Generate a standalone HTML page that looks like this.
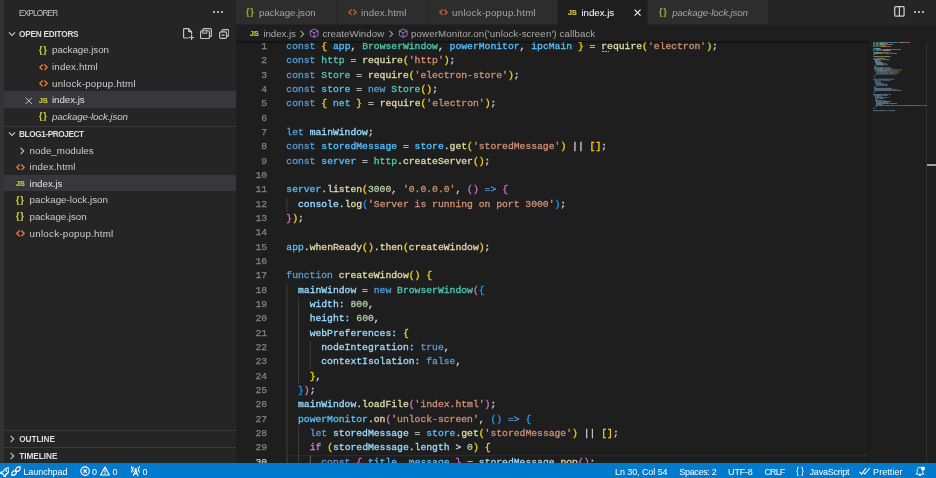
<!DOCTYPE html>
<html lang="en"><head><meta charset="utf-8"><title>index.js - blog1-project - Visual Studio Code</title>
<style>
html,body{margin:0;padding:0}
body{width:936px;height:478px;overflow:hidden;background:#1e1e1e;position:relative;font-family:"Liberation Sans", sans-serif;-webkit-font-smoothing:antialiased;will-change:transform}
.t{position:absolute;white-space:pre;line-height:14px;height:14px}
.ic{-webkit-text-stroke:0.2px}
.ln{position:absolute;left:0;width:31.2px;text-align:right;font-family:"Liberation Mono", monospace;font-size:9.72px;letter-spacing:-0.003px;line-height:14px;height:14px;white-space:pre;-webkit-text-stroke:0.25px}
.cl{position:absolute;left:50.30px;font-family:"Liberation Mono", monospace;font-size:9.72px;letter-spacing:-0.003px;line-height:14px;height:14px;white-space:pre;color:#d4d4d4;-webkit-text-stroke:0.3px}
</style></head><body>
<div style="position:absolute;left:0px;top:0px;width:4px;height:463px;background:#333333;"></div>
<div style="position:absolute;left:4px;top:0px;width:231.5px;height:463px;background:#252526;"></div>
<div style="position:absolute;left:235.5px;top:0px;width:0.5px;height:463px;background:#222222;"></div>
<div style="position:absolute;left:212.8px;top:11.1px;width:2.0px;height:2.0px;background:#c8c8c8;border-radius:35%"></div>
<div style="position:absolute;left:216.65px;top:11.1px;width:2.0px;height:2.0px;background:#c8c8c8;border-radius:35%"></div>
<div style="position:absolute;left:220.5px;top:11.1px;width:2.0px;height:2.0px;background:#c8c8c8;border-radius:35%"></div>
<svg style="position:absolute;left:7.699999999999999px;top:30.299999999999997px;" width="8" height="8" viewBox="0 0 8 8"><path d="M0.9 2.4 L4 5.5 L7.1 2.4" fill="none" stroke="#c5c5c5" stroke-width="1.1"/></svg>
<svg style="position:absolute;left:183px;top:28px;" width="11.5" height="12" viewBox="0 0 11.5 12"><path d="M5.6 10H1.4a0.8 0.8 0 0 1-0.8-0.8V1.4a0.8 0.8 0 0 1 0.8-0.8H5.6L8.6 3.6V6.4M5.6 0.6V3.6H8.6" fill="none" stroke="#c8c8c8" stroke-width="1.15" stroke-linejoin="round"/><path d="M8.6 7V12M6.1 9.5H11.1" fill="none" stroke="#c8c8c8" stroke-width="1.1"/></svg>
<svg style="position:absolute;left:200px;top:28.3px;" width="12" height="11.2" viewBox="0 0 12 11.2"><rect x="0.6" y="2.8" width="8.8" height="7.8" rx="1" fill="none" stroke="#c8c8c8" stroke-width="1.15"/><path d="M2.6 2.8V5.2H6.8V2.8" fill="none" stroke="#c8c8c8" stroke-width="1"/><path d="M3 2.8V1.6A1 1 0 0 1 4 0.6H10.4A1 1 0 0 1 11.4 1.6V7.4A1 1 0 0 1 10.4 8.4H9.4" fill="none" stroke="#c8c8c8" stroke-width="1.15"/></svg>
<svg style="position:absolute;left:219px;top:29px;" width="10.4" height="10" viewBox="0 0 10.4 10"><rect x="0.6" y="2.8" width="7" height="6.6" rx="1.5" fill="none" stroke="#c8c8c8" stroke-width="1.15"/><path d="M3 2.8V1.9A1.3 1.3 0 0 1 4.3 0.6H8.5A1.3 1.3 0 0 1 9.8 1.9V5.9A1.3 1.3 0 0 1 8.5 7.2H7.6M2.6 6.1H5.6" fill="none" stroke="#c8c8c8" stroke-width="1.15"/></svg>
<div style="position:absolute;left:4px;top:91.3px;width:231.5px;height:16.6px;background:#37373d;"></div>
<svg style="position:absolute;left:39.199999999999996px;top:63.6px;" width="9" height="6.8" viewBox="0 0 9 6.8"><path d="M3.7 0.6L0.9 3.4L3.7 6.2M5.3 0.6L8.1 3.4L5.3 6.2" fill="none" stroke="#e37933" stroke-width="1.35"/></svg>
<svg style="position:absolute;left:39.199999999999996px;top:80.19999999999999px;" width="9" height="6.8" viewBox="0 0 9 6.8"><path d="M3.7 0.6L0.9 3.4L3.7 6.2M5.3 0.6L8.1 3.4L5.3 6.2" fill="none" stroke="#e37933" stroke-width="1.35"/></svg>
<svg style="position:absolute;left:24.7px;top:96.7px;" width="7.6" height="7.6" viewBox="0 0 8 8"><path d="M0.7 0.7L7.3 7.3M7.3 0.7L0.7 7.3" stroke="#cccccc" stroke-width="1.0" fill="none"/></svg>
<div style="position:absolute;left:4px;top:125.5px;width:231.5px;height:0.7px;background:#3a3a3b;"></div>
<svg style="position:absolute;left:7.699999999999999px;top:130.2px;" width="8" height="8" viewBox="0 0 8 8"><path d="M0.9 2.4 L4 5.5 L7.1 2.4" fill="none" stroke="#c5c5c5" stroke-width="1.1"/></svg>
<div style="position:absolute;left:4px;top:175.2px;width:231.5px;height:15.9px;background:#37373d;"></div>
<svg style="position:absolute;left:18px;top:146.6px;" width="8" height="8" viewBox="0 0 8 8"><path d="M2.6 0.9 L5.7 4 L2.6 7.1" fill="none" stroke="#c5c5c5" stroke-width="1.1"/></svg>
<svg style="position:absolute;left:16.2px;top:163.6px;" width="9" height="6.8" viewBox="0 0 9 6.8"><path d="M3.7 0.6L0.9 3.4L3.7 6.2M5.3 0.6L8.1 3.4L5.3 6.2" fill="none" stroke="#e37933" stroke-width="1.35"/></svg>
<svg style="position:absolute;left:16.2px;top:230.2px;" width="9" height="6.8" viewBox="0 0 9 6.8"><path d="M3.7 0.6L0.9 3.4L3.7 6.2M5.3 0.6L8.1 3.4L5.3 6.2" fill="none" stroke="#e37933" stroke-width="1.35"/></svg>
<div style="position:absolute;left:4px;top:429.8px;width:231.5px;height:0.7px;background:#3a3a3b;"></div>
<svg style="position:absolute;left:7.5px;top:435.2px;" width="8" height="8" viewBox="0 0 8 8"><path d="M2.6 0.9 L5.7 4 L2.6 7.1" fill="none" stroke="#c5c5c5" stroke-width="1.1"/></svg>
<div style="position:absolute;left:4px;top:447.3px;width:231.5px;height:0.7px;background:#3a3a3b;"></div>
<svg style="position:absolute;left:7.5px;top:452px;" width="8" height="8" viewBox="0 0 8 8"><path d="M2.6 0.9 L5.7 4 L2.6 7.1" fill="none" stroke="#c5c5c5" stroke-width="1.1"/></svg>
<div style="position:absolute;left:236px;top:0px;width:700px;height:25px;background:#252526;"></div>
<div style="position:absolute;left:236px;top:0px;width:101.3px;height:24.4px;background:#2d2d2d;"></div>
<div style="position:absolute;left:338px;top:0px;width:90.3px;height:24.4px;background:#2d2d2d;"></div>
<svg style="position:absolute;left:348.09999999999997px;top:8.6px;" width="9" height="6.8" viewBox="0 0 9 6.8"><path d="M3.7 0.6L0.9 3.4L3.7 6.2M5.3 0.6L8.1 3.4L5.3 6.2" fill="none" stroke="#b06430" stroke-width="1.35"/></svg>
<div style="position:absolute;left:429px;top:0px;width:127.8px;height:24.4px;background:#2d2d2d;"></div>
<svg style="position:absolute;left:439.09999999999997px;top:8.6px;" width="9" height="6.8" viewBox="0 0 9 6.8"><path d="M3.7 0.6L0.9 3.4L3.7 6.2M5.3 0.6L8.1 3.4L5.3 6.2" fill="none" stroke="#b06430" stroke-width="1.35"/></svg>
<div style="position:absolute;left:557.5px;top:0px;width:89.8px;height:25px;background:#1e1e1e;"></div>
<div style="position:absolute;left:648px;top:0px;width:120.00000000000004px;height:24.4px;background:#2d2d2d;"></div>
<svg style="position:absolute;left:633.8px;top:9.2px;" width="7.2" height="7.2" viewBox="0 0 8 8"><path d="M0.7 0.7L7.3 7.3M7.3 0.7L0.7 7.3" stroke="#f0f0f0" stroke-width="1.25" fill="none"/></svg>
<svg style="position:absolute;left:894.3px;top:6.2px;" width="10.8" height="10.8" viewBox="0 0 10.8 10.8"><rect x="0.7" y="0.7" width="9.4" height="9.4" rx="1" fill="none" stroke="#cfcfcf" stroke-width="1.25"/><path d="M5.4 0.7V10.1" stroke="#cfcfcf" stroke-width="1.2"/></svg>
<div style="position:absolute;left:914.4px;top:11.3px;width:2.0px;height:2.0px;background:#c8c8c8;border-radius:35%"></div>
<div style="position:absolute;left:918.3px;top:11.3px;width:2.0px;height:2.0px;background:#c8c8c8;border-radius:35%"></div>
<div style="position:absolute;left:922.1999999999999px;top:11.3px;width:2.0px;height:2.0px;background:#c8c8c8;border-radius:35%"></div>
<svg style="position:absolute;left:298px;top:29.799999999999997px;" width="8" height="8" viewBox="0 0 8 8"><path d="M2.6 0.9 L5.7 4 L2.6 7.1" fill="none" stroke="#a0a0a0" stroke-width="1.1"/></svg>
<svg style="position:absolute;left:309px;top:28.2px;" width="10.4" height="10.4" viewBox="0 0 16 16"><path d="M8 1.5L14 4.5V11.5L8 14.5L2 11.5V4.5ZM2 4.5L8 7.5L14 4.5M8 7.5V14.5" fill="none" stroke="#b180d7" stroke-width="1.3" stroke-linejoin="round"/></svg>
<svg style="position:absolute;left:387.3px;top:29.799999999999997px;" width="8" height="8" viewBox="0 0 8 8"><path d="M2.6 0.9 L5.7 4 L2.6 7.1" fill="none" stroke="#a0a0a0" stroke-width="1.1"/></svg>
<svg style="position:absolute;left:397.8px;top:28.2px;" width="10.4" height="10.4" viewBox="0 0 16 16"><path d="M8 1.5L14 4.5V11.5L8 14.5L2 11.5V4.5ZM2 4.5L8 7.5L14 4.5M8 7.5V14.5" fill="none" stroke="#b180d7" stroke-width="1.3" stroke-linejoin="round"/></svg>
<div id="code" style="position:absolute;left:236px;top:0;width:633px;height:463px;overflow:hidden;clip-path:inset(41.5px 0 0 0)">
<svg style="position:absolute;left:0;top:0" width="633" height="463" viewBox="0 0 633 463"><rect x="51.6" y="455.60" width="581" height="14.3" fill="none" stroke="#2a2a2a" stroke-width="1.2"/><rect x="50.40" y="197.70" width="1" height="14.00" fill="#3e3e3e"/><rect x="50.40" y="283.70" width="1" height="186.00" fill="#3e3e3e"/><rect x="62.06" y="297.70" width="1" height="86.00" fill="#3e3e3e"/><rect x="73.72" y="340.70" width="1" height="29.00" fill="#3e3e3e"/><rect x="62.06" y="426.70" width="1" height="43.00" fill="#3e3e3e"/><rect x="73.72" y="455.70" width="1" height="14.00" fill="#6a6a6a"/></svg>
<div class="ln" style="top:40px;color:#858585">1</div>
<div class="cl" style="top:40px"><span style="color:#569cd6">const</span><span style="color:#d4d4d4"> </span><span style="color:#ffd700">{</span><span style="color:#d4d4d4"> </span><span style="color:#4fc1ff">app</span><span style="color:#d4d4d4">, </span><span style="color:#4ec9b0">BrowserWindow</span><span style="color:#d4d4d4">, </span><span style="color:#4fc1ff">powerMonitor</span><span style="color:#d4d4d4">, </span><span style="color:#4fc1ff">ipcMain</span><span style="color:#d4d4d4"> </span><span style="color:#ffd700">}</span><span style="color:#d4d4d4"> = </span><span style="color:#dcdcaa">require</span><span style="color:#ffd700">(</span><span style="color:#ce9178">&#x27;electron&#x27;</span><span style="color:#ffd700">)</span><span style="color:#d4d4d4">;</span></div>
<div class="ln" style="top:54px;color:#858585">2</div>
<div class="cl" style="top:54px"><span style="color:#569cd6">const</span><span style="color:#d4d4d4"> </span><span style="color:#4ec9b0">http</span><span style="color:#d4d4d4"> = </span><span style="color:#dcdcaa">require</span><span style="color:#ffd700">(</span><span style="color:#ce9178">&#x27;http&#x27;</span><span style="color:#ffd700">)</span><span style="color:#d4d4d4">;</span></div>
<div class="ln" style="top:69px;color:#858585">3</div>
<div class="cl" style="top:69px"><span style="color:#569cd6">const</span><span style="color:#d4d4d4"> </span><span style="color:#4ec9b0">Store</span><span style="color:#d4d4d4"> = </span><span style="color:#dcdcaa">require</span><span style="color:#ffd700">(</span><span style="color:#ce9178">&#x27;electron-store&#x27;</span><span style="color:#ffd700">)</span><span style="color:#d4d4d4">;</span></div>
<div class="ln" style="top:83px;color:#858585">4</div>
<div class="cl" style="top:83px"><span style="color:#569cd6">const</span><span style="color:#d4d4d4"> </span><span style="color:#4fc1ff">store</span><span style="color:#d4d4d4"> = </span><span style="color:#569cd6">new</span><span style="color:#d4d4d4"> </span><span style="color:#4ec9b0">Store</span><span style="color:#ffd700">()</span><span style="color:#d4d4d4">;</span></div>
<div class="ln" style="top:97px;color:#858585">5</div>
<div class="cl" style="top:97px"><span style="color:#569cd6">const</span><span style="color:#d4d4d4"> </span><span style="color:#ffd700">{</span><span style="color:#d4d4d4"> </span><span style="color:#4fc1ff">net</span><span style="color:#d4d4d4"> </span><span style="color:#ffd700">}</span><span style="color:#d4d4d4"> = </span><span style="color:#dcdcaa">require</span><span style="color:#ffd700">(</span><span style="color:#ce9178">&#x27;electron&#x27;</span><span style="color:#ffd700">)</span><span style="color:#d4d4d4">;</span></div>
<div class="ln" style="top:112px;color:#858585">6</div>
<div class="ln" style="top:126px;color:#858585">7</div>
<div class="cl" style="top:126px"><span style="color:#569cd6">let</span><span style="color:#d4d4d4"> </span><span style="color:#9cdcfe">mainWindow</span><span style="color:#d4d4d4">;</span></div>
<div class="ln" style="top:140px;color:#858585">8</div>
<div class="cl" style="top:140px"><span style="color:#569cd6">const</span><span style="color:#d4d4d4"> </span><span style="color:#4fc1ff">storedMessage</span><span style="color:#d4d4d4"> = </span><span style="color:#4fc1ff">store</span><span style="color:#d4d4d4">.</span><span style="color:#dcdcaa">get</span><span style="color:#ffd700">(</span><span style="color:#ce9178">&#x27;storedMessage&#x27;</span><span style="color:#ffd700">)</span><span style="color:#d4d4d4"> || </span><span style="color:#ffd700">[]</span><span style="color:#d4d4d4">;</span></div>
<div class="ln" style="top:155px;color:#858585">9</div>
<div class="cl" style="top:155px"><span style="color:#569cd6">const</span><span style="color:#d4d4d4"> </span><span style="color:#4fc1ff">server</span><span style="color:#d4d4d4"> = </span><span style="color:#4ec9b0">http</span><span style="color:#d4d4d4">.</span><span style="color:#dcdcaa">createServer</span><span style="color:#ffd700">()</span><span style="color:#d4d4d4">;</span></div>
<div class="ln" style="top:169px;color:#858585">10</div>
<div class="ln" style="top:183px;color:#858585">11</div>
<div class="cl" style="top:183px"><span style="color:#4fc1ff">server</span><span style="color:#d4d4d4">.</span><span style="color:#dcdcaa">listen</span><span style="color:#ffd700">(</span><span style="color:#b5cea8">3000</span><span style="color:#d4d4d4">, </span><span style="color:#ce9178">&#x27;0.0.0.0&#x27;</span><span style="color:#d4d4d4">, </span><span style="color:#da70d6">()</span><span style="color:#d4d4d4"> </span><span style="color:#569cd6">=&gt;</span><span style="color:#d4d4d4"> </span><span style="color:#da70d6">{</span></div>
<div class="ln" style="top:198px;color:#858585">12</div>
<div class="cl" style="top:198px"><span style="color:#d4d4d4">  </span><span style="color:#9cdcfe">console</span><span style="color:#d4d4d4">.</span><span style="color:#dcdcaa">log</span><span style="color:#179fff">(</span><span style="color:#ce9178">&#x27;Server is running on port 3000&#x27;</span><span style="color:#179fff">)</span><span style="color:#d4d4d4">;</span></div>
<div class="ln" style="top:212px;color:#858585">13</div>
<div class="cl" style="top:212px"><span style="color:#da70d6">}</span><span style="color:#ffd700">)</span><span style="color:#d4d4d4">;</span></div>
<div class="ln" style="top:226px;color:#858585">14</div>
<div class="ln" style="top:241px;color:#858585">15</div>
<div class="cl" style="top:241px"><span style="color:#4fc1ff">app</span><span style="color:#d4d4d4">.</span><span style="color:#dcdcaa">whenReady</span><span style="color:#ffd700">()</span><span style="color:#d4d4d4">.</span><span style="color:#dcdcaa">then</span><span style="color:#ffd700">(</span><span style="color:#dcdcaa">createWindow</span><span style="color:#ffd700">)</span><span style="color:#d4d4d4">;</span></div>
<div class="ln" style="top:255px;color:#858585">16</div>
<div class="ln" style="top:269px;color:#858585">17</div>
<div class="cl" style="top:269px"><span style="color:#569cd6">function</span><span style="color:#d4d4d4"> </span><span style="color:#dcdcaa">createWindow</span><span style="color:#ffd700">()</span><span style="color:#d4d4d4"> </span><span style="color:#ffd700">{</span></div>
<div class="ln" style="top:284px;color:#858585">18</div>
<div class="cl" style="top:284px"><span style="color:#d4d4d4">  </span><span style="color:#9cdcfe">mainWindow</span><span style="color:#d4d4d4"> = </span><span style="color:#569cd6">new</span><span style="color:#d4d4d4"> </span><span style="color:#4ec9b0">BrowserWindow</span><span style="color:#da70d6">(</span><span style="color:#179fff">{</span></div>
<div class="ln" style="top:298px;color:#858585">19</div>
<div class="cl" style="top:298px"><span style="color:#d4d4d4">    </span><span style="color:#9cdcfe">width</span><span style="color:#9cdcfe">:</span><span style="color:#d4d4d4"> </span><span style="color:#b5cea8">800</span><span style="color:#d4d4d4">,</span></div>
<div class="ln" style="top:312px;color:#858585">20</div>
<div class="cl" style="top:312px"><span style="color:#d4d4d4">    </span><span style="color:#9cdcfe">height</span><span style="color:#9cdcfe">:</span><span style="color:#d4d4d4"> </span><span style="color:#b5cea8">600</span><span style="color:#d4d4d4">,</span></div>
<div class="ln" style="top:327px;color:#858585">21</div>
<div class="cl" style="top:327px"><span style="color:#d4d4d4">    </span><span style="color:#9cdcfe">webPreferences</span><span style="color:#9cdcfe">:</span><span style="color:#d4d4d4"> </span><span style="color:#ffd700">{</span></div>
<div class="ln" style="top:341px;color:#858585">22</div>
<div class="cl" style="top:341px"><span style="color:#d4d4d4">      </span><span style="color:#9cdcfe">nodeIntegration</span><span style="color:#9cdcfe">:</span><span style="color:#d4d4d4"> </span><span style="color:#569cd6">true</span><span style="color:#d4d4d4">,</span></div>
<div class="ln" style="top:355px;color:#858585">23</div>
<div class="cl" style="top:355px"><span style="color:#d4d4d4">      </span><span style="color:#9cdcfe">contextIsolation</span><span style="color:#9cdcfe">:</span><span style="color:#d4d4d4"> </span><span style="color:#569cd6">false</span><span style="color:#d4d4d4">,</span></div>
<div class="ln" style="top:370px;color:#858585">24</div>
<div class="cl" style="top:370px"><span style="color:#d4d4d4">    </span><span style="color:#ffd700">}</span><span style="color:#d4d4d4">,</span></div>
<div class="ln" style="top:384px;color:#858585">25</div>
<div class="cl" style="top:384px"><span style="color:#d4d4d4">  </span><span style="color:#179fff">}</span><span style="color:#da70d6">)</span><span style="color:#d4d4d4">;</span></div>
<div class="ln" style="top:398px;color:#858585">26</div>
<div class="cl" style="top:398px"><span style="color:#d4d4d4">  </span><span style="color:#9cdcfe">mainWindow</span><span style="color:#d4d4d4">.</span><span style="color:#dcdcaa">loadFile</span><span style="color:#da70d6">(</span><span style="color:#ce9178">&#x27;index.html&#x27;</span><span style="color:#da70d6">)</span><span style="color:#d4d4d4">;</span></div>
<div class="ln" style="top:413px;color:#858585">27</div>
<div class="cl" style="top:413px"><span style="color:#d4d4d4">  </span><span style="color:#4fc1ff">powerMonitor</span><span style="color:#d4d4d4">.</span><span style="color:#dcdcaa">on</span><span style="color:#da70d6">(</span><span style="color:#ce9178">&#x27;unlock-screen&#x27;</span><span style="color:#d4d4d4">, </span><span style="color:#179fff">()</span><span style="color:#d4d4d4"> </span><span style="color:#569cd6">=&gt;</span><span style="color:#d4d4d4"> </span><span style="color:#179fff">{</span></div>
<div class="ln" style="top:427px;color:#858585">28</div>
<div class="cl" style="top:427px"><span style="color:#d4d4d4">    </span><span style="color:#569cd6">let</span><span style="color:#d4d4d4"> </span><span style="color:#9cdcfe">storedMessage</span><span style="color:#d4d4d4"> = </span><span style="color:#4fc1ff">store</span><span style="color:#d4d4d4">.</span><span style="color:#dcdcaa">get</span><span style="color:#ffd700">(</span><span style="color:#ce9178">&#x27;storedMessage&#x27;</span><span style="color:#ffd700">)</span><span style="color:#d4d4d4"> || </span><span style="color:#ffd700">[]</span><span style="color:#d4d4d4">;</span></div>
<div class="ln" style="top:441px;color:#858585">29</div>
<div class="cl" style="top:441px"><span style="color:#d4d4d4">    </span><span style="color:#c586c0">if</span><span style="color:#d4d4d4"> </span><span style="color:#ffd700">(</span><span style="color:#9cdcfe">storedMessage</span><span style="color:#d4d4d4">.</span><span style="color:#9cdcfe">length</span><span style="color:#d4d4d4"> &gt; </span><span style="color:#b5cea8">0</span><span style="color:#ffd700">)</span><span style="color:#d4d4d4"> </span><span style="color:#ffd700">{</span></div>
<div class="ln" style="top:456px;color:#c6c6c6">30</div>
<div class="cl" style="top:456px"><span style="color:#d4d4d4">      </span><span style="color:#569cd6">const</span><span style="color:#d4d4d4"> </span><span style="color:#da70d6">{</span><span style="color:#d4d4d4"> </span><span style="color:#4fc1ff">title</span><span style="color:#d4d4d4">, </span><span style="color:#4fc1ff">message</span><span style="color:#d4d4d4"> </span><span style="color:#da70d6">}</span><span style="color:#d4d4d4"> = </span><span style="color:#9cdcfe">storedMessage</span><span style="color:#d4d4d4">.</span><span style="color:#dcdcaa">pop</span><span style="color:#da70d6">()</span><span style="color:#d4d4d4">;</span></div>
<div style="position:absolute;left:366.4px;top:51.2px;width:1.5px;height:1.3px;background:#b4b4b4"></div>
<div style="position:absolute;left:369.0px;top:51.2px;width:1.5px;height:1.3px;background:#b4b4b4"></div>
<div style="position:absolute;left:371.6px;top:51.2px;width:1.5px;height:1.3px;background:#b4b4b4"></div>
</div>
<div style="position:absolute;left:236px;top:41.3px;width:633px;height:2.6px;background:transparent;background:linear-gradient(rgba(0,0,0,.45),rgba(0,0,0,0))"></div>
<div style="position:absolute;left:868.4px;top:42.5px;width:1px;height:420.5px;background:#191919;"></div>
<div style="position:absolute;left:926px;top:42.5px;width:0.8px;height:420.5px;background:#303030;"></div>
<div style="position:absolute;left:927px;top:164.3px;width:9px;height:1.3px;background:#a0a0a0;"></div>
<svg style="position:absolute;left:873.3px;top:41.7px;" width="54" height="72" viewBox="0 0 54 72"><g opacity="0.72"><rect x="0.00" y="0.00" width="2.50" height="0.8" fill="#569cd6"/><rect x="3.00" y="0.00" width="0.50" height="0.8" fill="#ffd700"/><rect x="4.00" y="0.00" width="1.50" height="0.8" fill="#4fc1ff"/><rect x="5.50" y="0.00" width="0.50" height="0.8" fill="#d4d4d4"/><rect x="6.50" y="0.00" width="6.50" height="0.8" fill="#4ec9b0"/><rect x="13.00" y="0.00" width="0.50" height="0.8" fill="#d4d4d4"/><rect x="14.00" y="0.00" width="6.00" height="0.8" fill="#4fc1ff"/><rect x="20.00" y="0.00" width="0.50" height="0.8" fill="#d4d4d4"/><rect x="21.00" y="0.00" width="3.50" height="0.8" fill="#4fc1ff"/><rect x="25.00" y="0.00" width="0.50" height="0.8" fill="#ffd700"/><rect x="26.00" y="0.00" width="0.50" height="0.8" fill="#d4d4d4"/><rect x="27.00" y="0.00" width="3.50" height="0.8" fill="#dcdcaa"/><rect x="30.50" y="0.00" width="0.50" height="0.8" fill="#ffd700"/><rect x="31.00" y="0.00" width="5.00" height="0.8" fill="#ce9178"/><rect x="36.00" y="0.00" width="0.50" height="0.8" fill="#ffd700"/><rect x="36.50" y="0.00" width="0.50" height="0.8" fill="#d4d4d4"/><rect x="0.00" y="1.02" width="2.50" height="0.8" fill="#569cd6"/><rect x="3.00" y="1.02" width="2.00" height="0.8" fill="#4ec9b0"/><rect x="5.50" y="1.02" width="0.50" height="0.8" fill="#d4d4d4"/><rect x="6.50" y="1.02" width="3.50" height="0.8" fill="#dcdcaa"/><rect x="10.00" y="1.02" width="0.50" height="0.8" fill="#ffd700"/><rect x="10.50" y="1.02" width="3.00" height="0.8" fill="#ce9178"/><rect x="13.50" y="1.02" width="0.50" height="0.8" fill="#ffd700"/><rect x="14.00" y="1.02" width="0.50" height="0.8" fill="#d4d4d4"/><rect x="0.00" y="2.04" width="2.50" height="0.8" fill="#569cd6"/><rect x="3.00" y="2.04" width="2.50" height="0.8" fill="#4ec9b0"/><rect x="6.00" y="2.04" width="0.50" height="0.8" fill="#d4d4d4"/><rect x="7.00" y="2.04" width="3.50" height="0.8" fill="#dcdcaa"/><rect x="10.50" y="2.04" width="0.50" height="0.8" fill="#ffd700"/><rect x="11.00" y="2.04" width="8.00" height="0.8" fill="#ce9178"/><rect x="19.00" y="2.04" width="0.50" height="0.8" fill="#ffd700"/><rect x="19.50" y="2.04" width="0.50" height="0.8" fill="#d4d4d4"/><rect x="0.00" y="3.06" width="2.50" height="0.8" fill="#569cd6"/><rect x="3.00" y="3.06" width="2.50" height="0.8" fill="#4fc1ff"/><rect x="6.00" y="3.06" width="0.50" height="0.8" fill="#d4d4d4"/><rect x="7.00" y="3.06" width="1.50" height="0.8" fill="#569cd6"/><rect x="9.00" y="3.06" width="2.50" height="0.8" fill="#4ec9b0"/><rect x="11.50" y="3.06" width="1.00" height="0.8" fill="#ffd700"/><rect x="12.50" y="3.06" width="0.50" height="0.8" fill="#d4d4d4"/><rect x="0.00" y="4.08" width="2.50" height="0.8" fill="#569cd6"/><rect x="3.00" y="4.08" width="0.50" height="0.8" fill="#ffd700"/><rect x="4.00" y="4.08" width="1.50" height="0.8" fill="#4fc1ff"/><rect x="6.00" y="4.08" width="0.50" height="0.8" fill="#ffd700"/><rect x="7.00" y="4.08" width="0.50" height="0.8" fill="#d4d4d4"/><rect x="8.00" y="4.08" width="3.50" height="0.8" fill="#dcdcaa"/><rect x="11.50" y="4.08" width="0.50" height="0.8" fill="#ffd700"/><rect x="12.00" y="4.08" width="5.00" height="0.8" fill="#ce9178"/><rect x="17.00" y="4.08" width="0.50" height="0.8" fill="#ffd700"/><rect x="17.50" y="4.08" width="0.50" height="0.8" fill="#d4d4d4"/><rect x="0.00" y="6.12" width="1.50" height="0.8" fill="#569cd6"/><rect x="2.00" y="6.12" width="5.00" height="0.8" fill="#9cdcfe"/><rect x="7.00" y="6.12" width="0.50" height="0.8" fill="#d4d4d4"/><rect x="0.00" y="7.14" width="2.50" height="0.8" fill="#569cd6"/><rect x="3.00" y="7.14" width="6.50" height="0.8" fill="#4fc1ff"/><rect x="10.00" y="7.14" width="0.50" height="0.8" fill="#d4d4d4"/><rect x="11.00" y="7.14" width="2.50" height="0.8" fill="#4fc1ff"/><rect x="13.50" y="7.14" width="0.50" height="0.8" fill="#d4d4d4"/><rect x="14.00" y="7.14" width="1.50" height="0.8" fill="#dcdcaa"/><rect x="15.50" y="7.14" width="0.50" height="0.8" fill="#ffd700"/><rect x="16.00" y="7.14" width="7.50" height="0.8" fill="#ce9178"/><rect x="23.50" y="7.14" width="0.50" height="0.8" fill="#ffd700"/><rect x="24.50" y="7.14" width="1.00" height="0.8" fill="#d4d4d4"/><rect x="26.00" y="7.14" width="1.00" height="0.8" fill="#ffd700"/><rect x="27.00" y="7.14" width="0.50" height="0.8" fill="#d4d4d4"/><rect x="0.00" y="8.16" width="2.50" height="0.8" fill="#569cd6"/><rect x="3.00" y="8.16" width="3.00" height="0.8" fill="#4fc1ff"/><rect x="6.50" y="8.16" width="0.50" height="0.8" fill="#d4d4d4"/><rect x="7.50" y="8.16" width="2.00" height="0.8" fill="#4ec9b0"/><rect x="9.50" y="8.16" width="0.50" height="0.8" fill="#d4d4d4"/><rect x="10.00" y="8.16" width="6.00" height="0.8" fill="#dcdcaa"/><rect x="16.00" y="8.16" width="1.00" height="0.8" fill="#ffd700"/><rect x="17.00" y="8.16" width="0.50" height="0.8" fill="#d4d4d4"/><rect x="0.00" y="10.20" width="3.00" height="0.8" fill="#4fc1ff"/><rect x="3.00" y="10.20" width="0.50" height="0.8" fill="#d4d4d4"/><rect x="3.50" y="10.20" width="3.00" height="0.8" fill="#dcdcaa"/><rect x="6.50" y="10.20" width="0.50" height="0.8" fill="#ffd700"/><rect x="7.00" y="10.20" width="2.00" height="0.8" fill="#b5cea8"/><rect x="9.00" y="10.20" width="0.50" height="0.8" fill="#d4d4d4"/><rect x="10.00" y="10.20" width="4.50" height="0.8" fill="#ce9178"/><rect x="14.50" y="10.20" width="0.50" height="0.8" fill="#d4d4d4"/><rect x="15.50" y="10.20" width="1.00" height="0.8" fill="#da70d6"/><rect x="17.00" y="10.20" width="1.00" height="0.8" fill="#569cd6"/><rect x="18.50" y="10.20" width="0.50" height="0.8" fill="#da70d6"/><rect x="1.00" y="11.22" width="3.50" height="0.8" fill="#9cdcfe"/><rect x="4.50" y="11.22" width="0.50" height="0.8" fill="#d4d4d4"/><rect x="5.00" y="11.22" width="1.50" height="0.8" fill="#dcdcaa"/><rect x="6.50" y="11.22" width="0.50" height="0.8" fill="#179fff"/><rect x="7.00" y="11.22" width="3.50" height="0.8" fill="#ce9178"/><rect x="11.00" y="11.22" width="1.00" height="0.8" fill="#ce9178"/><rect x="12.50" y="11.22" width="3.50" height="0.8" fill="#ce9178"/><rect x="16.50" y="11.22" width="1.00" height="0.8" fill="#ce9178"/><rect x="18.00" y="11.22" width="2.00" height="0.8" fill="#ce9178"/><rect x="20.50" y="11.22" width="2.50" height="0.8" fill="#ce9178"/><rect x="23.00" y="11.22" width="0.50" height="0.8" fill="#179fff"/><rect x="23.50" y="11.22" width="0.50" height="0.8" fill="#d4d4d4"/><rect x="0.00" y="12.24" width="0.50" height="0.8" fill="#da70d6"/><rect x="0.50" y="12.24" width="0.50" height="0.8" fill="#ffd700"/><rect x="1.00" y="12.24" width="0.50" height="0.8" fill="#d4d4d4"/><rect x="0.00" y="14.28" width="1.50" height="0.8" fill="#4fc1ff"/><rect x="1.50" y="14.28" width="0.50" height="0.8" fill="#d4d4d4"/><rect x="2.00" y="14.28" width="4.50" height="0.8" fill="#dcdcaa"/><rect x="6.50" y="14.28" width="1.00" height="0.8" fill="#ffd700"/><rect x="7.50" y="14.28" width="0.50" height="0.8" fill="#d4d4d4"/><rect x="8.00" y="14.28" width="2.00" height="0.8" fill="#dcdcaa"/><rect x="10.00" y="14.28" width="0.50" height="0.8" fill="#ffd700"/><rect x="10.50" y="14.28" width="6.00" height="0.8" fill="#dcdcaa"/><rect x="16.50" y="14.28" width="0.50" height="0.8" fill="#ffd700"/><rect x="17.00" y="14.28" width="0.50" height="0.8" fill="#d4d4d4"/><rect x="0.00" y="16.32" width="4.00" height="0.8" fill="#569cd6"/><rect x="4.50" y="16.32" width="6.00" height="0.8" fill="#dcdcaa"/><rect x="10.50" y="16.32" width="1.00" height="0.8" fill="#ffd700"/><rect x="12.00" y="16.32" width="0.50" height="0.8" fill="#ffd700"/><rect x="1.00" y="17.34" width="5.00" height="0.8" fill="#9cdcfe"/><rect x="6.50" y="17.34" width="0.50" height="0.8" fill="#d4d4d4"/><rect x="7.50" y="17.34" width="1.50" height="0.8" fill="#569cd6"/><rect x="9.50" y="17.34" width="6.50" height="0.8" fill="#4ec9b0"/><rect x="16.00" y="17.34" width="0.50" height="0.8" fill="#da70d6"/><rect x="16.50" y="17.34" width="0.50" height="0.8" fill="#179fff"/><rect x="2.00" y="18.36" width="2.50" height="0.8" fill="#9cdcfe"/><rect x="4.50" y="18.36" width="0.50" height="0.8" fill="#9cdcfe"/><rect x="5.50" y="18.36" width="1.50" height="0.8" fill="#b5cea8"/><rect x="7.00" y="18.36" width="0.50" height="0.8" fill="#d4d4d4"/><rect x="2.00" y="19.38" width="3.00" height="0.8" fill="#9cdcfe"/><rect x="5.00" y="19.38" width="0.50" height="0.8" fill="#9cdcfe"/><rect x="6.00" y="19.38" width="1.50" height="0.8" fill="#b5cea8"/><rect x="7.50" y="19.38" width="0.50" height="0.8" fill="#d4d4d4"/><rect x="2.00" y="20.40" width="7.00" height="0.8" fill="#9cdcfe"/><rect x="9.00" y="20.40" width="0.50" height="0.8" fill="#9cdcfe"/><rect x="10.00" y="20.40" width="0.50" height="0.8" fill="#ffd700"/><rect x="3.00" y="21.42" width="7.50" height="0.8" fill="#9cdcfe"/><rect x="10.50" y="21.42" width="0.50" height="0.8" fill="#9cdcfe"/><rect x="11.50" y="21.42" width="2.00" height="0.8" fill="#569cd6"/><rect x="13.50" y="21.42" width="0.50" height="0.8" fill="#d4d4d4"/><rect x="3.00" y="22.44" width="8.00" height="0.8" fill="#9cdcfe"/><rect x="11.00" y="22.44" width="0.50" height="0.8" fill="#9cdcfe"/><rect x="12.00" y="22.44" width="2.50" height="0.8" fill="#569cd6"/><rect x="14.50" y="22.44" width="0.50" height="0.8" fill="#d4d4d4"/><rect x="2.00" y="23.46" width="0.50" height="0.8" fill="#ffd700"/><rect x="2.50" y="23.46" width="0.50" height="0.8" fill="#d4d4d4"/><rect x="1.00" y="24.48" width="0.50" height="0.8" fill="#179fff"/><rect x="1.50" y="24.48" width="0.50" height="0.8" fill="#da70d6"/><rect x="2.00" y="24.48" width="0.50" height="0.8" fill="#d4d4d4"/><rect x="1.00" y="25.50" width="5.00" height="0.8" fill="#9cdcfe"/><rect x="6.00" y="25.50" width="0.50" height="0.8" fill="#d4d4d4"/><rect x="6.50" y="25.50" width="4.00" height="0.8" fill="#dcdcaa"/><rect x="10.50" y="25.50" width="0.50" height="0.8" fill="#da70d6"/><rect x="11.00" y="25.50" width="6.00" height="0.8" fill="#ce9178"/><rect x="17.00" y="25.50" width="0.50" height="0.8" fill="#da70d6"/><rect x="17.50" y="25.50" width="0.50" height="0.8" fill="#d4d4d4"/><rect x="1.00" y="26.52" width="6.00" height="0.8" fill="#4fc1ff"/><rect x="7.00" y="26.52" width="0.50" height="0.8" fill="#d4d4d4"/><rect x="7.50" y="26.52" width="1.00" height="0.8" fill="#dcdcaa"/><rect x="8.50" y="26.52" width="0.50" height="0.8" fill="#da70d6"/><rect x="9.00" y="26.52" width="7.50" height="0.8" fill="#ce9178"/><rect x="16.50" y="26.52" width="0.50" height="0.8" fill="#d4d4d4"/><rect x="17.50" y="26.52" width="1.00" height="0.8" fill="#179fff"/><rect x="19.00" y="26.52" width="1.00" height="0.8" fill="#569cd6"/><rect x="20.50" y="26.52" width="0.50" height="0.8" fill="#179fff"/><rect x="2.00" y="27.54" width="1.50" height="0.8" fill="#569cd6"/><rect x="4.00" y="27.54" width="6.50" height="0.8" fill="#9cdcfe"/><rect x="11.00" y="27.54" width="0.50" height="0.8" fill="#d4d4d4"/><rect x="12.00" y="27.54" width="2.50" height="0.8" fill="#4fc1ff"/><rect x="14.50" y="27.54" width="0.50" height="0.8" fill="#d4d4d4"/><rect x="15.00" y="27.54" width="1.50" height="0.8" fill="#dcdcaa"/><rect x="16.50" y="27.54" width="0.50" height="0.8" fill="#ffd700"/><rect x="17.00" y="27.54" width="7.50" height="0.8" fill="#ce9178"/><rect x="24.50" y="27.54" width="0.50" height="0.8" fill="#ffd700"/><rect x="25.50" y="27.54" width="1.00" height="0.8" fill="#d4d4d4"/><rect x="27.00" y="27.54" width="1.00" height="0.8" fill="#ffd700"/><rect x="28.00" y="27.54" width="0.50" height="0.8" fill="#d4d4d4"/><rect x="2.00" y="28.56" width="1.00" height="0.8" fill="#c586c0"/><rect x="3.50" y="28.56" width="0.50" height="0.8" fill="#ffd700"/><rect x="4.00" y="28.56" width="6.50" height="0.8" fill="#9cdcfe"/><rect x="10.50" y="28.56" width="0.50" height="0.8" fill="#d4d4d4"/><rect x="11.00" y="28.56" width="3.00" height="0.8" fill="#9cdcfe"/><rect x="14.50" y="28.56" width="0.50" height="0.8" fill="#d4d4d4"/><rect x="15.50" y="28.56" width="0.50" height="0.8" fill="#b5cea8"/><rect x="16.00" y="28.56" width="0.50" height="0.8" fill="#ffd700"/><rect x="17.00" y="28.56" width="0.50" height="0.8" fill="#ffd700"/><rect x="3.00" y="29.58" width="2.50" height="0.8" fill="#569cd6"/><rect x="6.00" y="29.58" width="0.50" height="0.8" fill="#da70d6"/><rect x="7.00" y="29.58" width="2.50" height="0.8" fill="#4fc1ff"/><rect x="9.50" y="29.58" width="0.50" height="0.8" fill="#d4d4d4"/><rect x="10.50" y="29.58" width="3.50" height="0.8" fill="#4fc1ff"/><rect x="14.50" y="29.58" width="0.50" height="0.8" fill="#da70d6"/><rect x="15.50" y="29.58" width="0.50" height="0.8" fill="#d4d4d4"/><rect x="16.50" y="29.58" width="6.50" height="0.8" fill="#9cdcfe"/><rect x="23.00" y="29.58" width="0.50" height="0.8" fill="#d4d4d4"/><rect x="23.50" y="29.58" width="1.50" height="0.8" fill="#dcdcaa"/><rect x="25.00" y="29.58" width="1.00" height="0.8" fill="#da70d6"/><rect x="26.00" y="29.58" width="0.50" height="0.8" fill="#d4d4d4"/><rect x="3.00" y="30.60" width="12.00" height="0.8" fill="#7aa6c4"/><rect x="15.50" y="30.60" width="4.50" height="0.8" fill="#7aa6c4"/><rect x="3.00" y="31.62" width="13.00" height="0.8" fill="#7aa6c4"/><rect x="16.50" y="31.62" width="7.50" height="0.8" fill="#7aa6c4"/><rect x="2.00" y="32.64" width="0.50" height="0.8" fill="#7aa6c4"/><rect x="1.00" y="33.66" width="1.50" height="0.8" fill="#7aa6c4"/><rect x="0.00" y="34.68" width="0.50" height="0.8" fill="#7aa6c4"/><rect x="0.00" y="36.72" width="4.00" height="0.8" fill="#7aa6c4"/><rect x="4.50" y="36.72" width="12.00" height="0.8" fill="#7aa6c4"/><rect x="17.00" y="36.72" width="4.00" height="0.8" fill="#7aa6c4"/><rect x="21.50" y="36.72" width="0.50" height="0.8" fill="#7aa6c4"/><rect x="1.00" y="37.74" width="2.50" height="0.8" fill="#7aa6c4"/><rect x="4.00" y="37.74" width="2.50" height="0.8" fill="#7aa6c4"/><rect x="7.00" y="37.74" width="0.50" height="0.8" fill="#7aa6c4"/><rect x="8.00" y="37.74" width="1.50" height="0.8" fill="#7aa6c4"/><rect x="10.00" y="37.74" width="7.50" height="0.8" fill="#7aa6c4"/><rect x="2.00" y="38.76" width="3.00" height="0.8" fill="#7aa6c4"/><rect x="5.50" y="38.76" width="2.00" height="0.8" fill="#7aa6c4"/><rect x="2.00" y="39.78" width="3.50" height="0.8" fill="#7aa6c4"/><rect x="6.00" y="39.78" width="2.00" height="0.8" fill="#7aa6c4"/><rect x="2.00" y="40.80" width="7.50" height="0.8" fill="#7aa6c4"/><rect x="10.00" y="40.80" width="0.50" height="0.8" fill="#7aa6c4"/><rect x="3.00" y="41.82" width="8.00" height="0.8" fill="#7aa6c4"/><rect x="11.50" y="41.82" width="2.50" height="0.8" fill="#7aa6c4"/><rect x="3.00" y="42.84" width="8.50" height="0.8" fill="#7aa6c4"/><rect x="12.00" y="42.84" width="3.00" height="0.8" fill="#7aa6c4"/><rect x="2.00" y="43.86" width="1.00" height="0.8" fill="#7aa6c4"/><rect x="1.00" y="44.88" width="1.50" height="0.8" fill="#7aa6c4"/><rect x="1.00" y="45.90" width="18.00" height="0.8" fill="#7aa6c4"/><rect x="1.00" y="46.92" width="19.50" height="0.8" fill="#7aa6c4"/><rect x="21.00" y="46.92" width="1.00" height="0.8" fill="#7aa6c4"/><rect x="22.50" y="46.92" width="1.00" height="0.8" fill="#7aa6c4"/><rect x="24.00" y="46.92" width="0.50" height="0.8" fill="#7aa6c4"/><rect x="2.00" y="47.94" width="16.50" height="0.8" fill="#7aa6c4"/><rect x="19.00" y="47.94" width="0.50" height="0.8" fill="#7aa6c4"/><rect x="20.00" y="47.94" width="3.00" height="0.8" fill="#7aa6c4"/><rect x="23.50" y="47.94" width="3.50" height="0.8" fill="#7aa6c4"/><rect x="27.50" y="47.94" width="1.50" height="0.8" fill="#7aa6c4"/><rect x="1.00" y="48.96" width="1.50" height="0.8" fill="#7aa6c4"/><rect x="0.00" y="49.98" width="0.50" height="0.8" fill="#7aa6c4"/><rect x="0.00" y="52.02" width="10.00" height="0.8" fill="#7aa6c4"/><rect x="10.50" y="52.02" width="2.50" height="0.8" fill="#7aa6c4"/><rect x="13.50" y="52.02" width="2.00" height="0.8" fill="#7aa6c4"/><rect x="16.00" y="52.02" width="1.00" height="0.8" fill="#7aa6c4"/><rect x="17.50" y="52.02" width="0.50" height="0.8" fill="#7aa6c4"/><rect x="1.00" y="53.04" width="1.00" height="0.8" fill="#7aa6c4"/><rect x="2.50" y="53.04" width="5.50" height="0.8" fill="#7aa6c4"/><rect x="8.50" y="53.04" width="1.50" height="0.8" fill="#7aa6c4"/><rect x="10.50" y="53.04" width="3.50" height="0.8" fill="#7aa6c4"/><rect x="14.50" y="53.04" width="0.50" height="0.8" fill="#7aa6c4"/><rect x="2.00" y="54.06" width="1.50" height="0.8" fill="#7aa6c4"/><rect x="4.00" y="54.06" width="2.00" height="0.8" fill="#7aa6c4"/><rect x="6.50" y="54.06" width="0.50" height="0.8" fill="#7aa6c4"/><rect x="7.50" y="54.06" width="1.50" height="0.8" fill="#7aa6c4"/><rect x="2.00" y="55.08" width="7.00" height="0.8" fill="#7aa6c4"/><rect x="9.50" y="55.08" width="3.50" height="0.8" fill="#7aa6c4"/><rect x="13.50" y="55.08" width="1.00" height="0.8" fill="#7aa6c4"/><rect x="15.00" y="55.08" width="0.50" height="0.8" fill="#7aa6c4"/><rect x="3.00" y="56.10" width="2.00" height="0.8" fill="#7aa6c4"/><rect x="5.50" y="56.10" width="1.00" height="0.8" fill="#7aa6c4"/><rect x="7.00" y="56.10" width="3.00" height="0.8" fill="#7aa6c4"/><rect x="2.00" y="57.12" width="1.50" height="0.8" fill="#7aa6c4"/><rect x="2.00" y="58.14" width="6.50" height="0.8" fill="#7aa6c4"/><rect x="9.00" y="58.14" width="1.00" height="0.8" fill="#7aa6c4"/><rect x="10.50" y="58.14" width="1.00" height="0.8" fill="#7aa6c4"/><rect x="12.00" y="58.14" width="0.50" height="0.8" fill="#7aa6c4"/><rect x="3.00" y="59.16" width="2.50" height="0.8" fill="#7aa6c4"/><rect x="6.00" y="59.16" width="2.00" height="0.8" fill="#7aa6c4"/><rect x="8.50" y="59.16" width="0.50" height="0.8" fill="#7aa6c4"/><rect x="9.50" y="59.16" width="8.50" height="0.8" fill="#7aa6c4"/><rect x="3.00" y="60.18" width="12.50" height="0.8" fill="#7aa6c4"/><rect x="3.00" y="61.20" width="13.00" height="0.8" fill="#7aa6c4"/><rect x="16.50" y="61.20" width="7.50" height="0.8" fill="#7aa6c4"/><rect x="3.00" y="62.22" width="7.00" height="0.8" fill="#7aa6c4"/><rect x="3.00" y="63.24" width="2.50" height="0.8" fill="#7aa6c4"/><rect x="6.00" y="63.24" width="3.50" height="0.8" fill="#7aa6c4"/><rect x="10.00" y="63.24" width="0.50" height="0.8" fill="#7aa6c4"/><rect x="11.00" y="63.24" width="6.50" height="0.8" fill="#7aa6c4"/><rect x="18.00" y="63.24" width="3.50" height="0.8" fill="#7aa6c4"/><rect x="22.00" y="63.24" width="3.50" height="0.8" fill="#7aa6c4"/><rect x="26.00" y="63.24" width="2.00" height="0.8" fill="#7aa6c4"/><rect x="28.50" y="63.24" width="15.50" height="0.8" fill="#7aa6c4"/><rect x="44.50" y="63.24" width="4.00" height="0.8" fill="#7aa6c4"/><rect x="49.00" y="63.24" width="1.50" height="0.8" fill="#7aa6c4"/><rect x="51.00" y="63.24" width="2.00" height="0.8" fill="#7aa6c4"/><rect x="53.50" y="63.24" width="1.50" height="0.8" fill="#7aa6c4"/><rect x="2.00" y="64.26" width="1.50" height="0.8" fill="#7aa6c4"/><rect x="1.00" y="65.28" width="0.50" height="0.8" fill="#7aa6c4"/><rect x="0.00" y="66.30" width="1.50" height="0.8" fill="#7aa6c4"/><rect x="0.00" y="68.34" width="12.50" height="0.8" fill="#7aa6c4"/><rect x="13.00" y="68.34" width="1.00" height="0.8" fill="#7aa6c4"/><rect x="14.50" y="68.34" width="1.00" height="0.8" fill="#7aa6c4"/><rect x="16.00" y="68.34" width="6.00" height="0.8" fill="#7aa6c4"/></g></svg>
<div style="position:absolute;left:0px;top:463px;width:936px;height:15px;background:#007acc;"></div>
<svg style="position:absolute;left:-0.4px;top:466.6px;" width="9.8" height="10.6" viewBox="0 0 10 11"><path d="M9.3 0.8C6.5 0.8 4.2 2.4 2.9 5L1 5.3L0.3 6.6L2.5 6.9L4 8.4L4.3 10.4L5.6 9.8L5.9 7.9C8.4 6.6 9.6 4 9.3 0.8Z" fill="none" stroke="#fff" stroke-width="1.25" stroke-linejoin="round"/><circle cx="6.5" cy="3.8" r="1.1" fill="#fff"/></svg>
<svg style="position:absolute;left:10.6px;top:466.4px;" width="10" height="10" viewBox="0 0 10 10"><g fill="none" stroke="#fff" stroke-width="1.15"><ellipse cx="3.1" cy="7" rx="2.5" ry="1.8" transform="rotate(-45 3.1 7)"/><ellipse cx="6.9" cy="3.2" rx="2.5" ry="1.8" transform="rotate(-45 6.9 3.2)"/><path d="M1.5 8.6L0.4 9.7M8.5 1.6L9.6 0.5M4.3 5.8L5.7 4.4"/></g></svg>
<svg style="position:absolute;left:79.5px;top:466.4px;" width="10.2" height="10.2" viewBox="0 0 10 10"><circle cx="5" cy="5" r="4.2" fill="none" stroke="#fff" stroke-width="1.15"/><path d="M3.3 3.3L6.7 6.7M6.7 3.3L3.3 6.7" stroke="#fff" stroke-width="1.15"/></svg>
<svg style="position:absolute;left:100.4px;top:466.4px;" width="10" height="10" viewBox="0 0 10 10"><path d="M5 1L9.4 9H0.6Z" fill="none" stroke="#fff" stroke-width="1.15" stroke-linejoin="round"/><path d="M5 3.8V6.4M5 7.1V8.1" stroke="#fff" stroke-width="1.1"/></svg>
<svg style="position:absolute;left:130.6px;top:466.2px;" width="9.4" height="10.4" viewBox="0 0 9.4 10.4"><path d="M4.7 4.2L2.2 10M4.7 4.2L7.2 10M3.2 7.6H6.2" stroke="#fff" stroke-width="1.15" fill="none"/><circle cx="4.7" cy="3.4" r="1.2" fill="#fff"/><path d="M2.6 1.2C1.4 2.4 1.4 4.4 2.6 5.6M6.8 1.2C8 2.4 8 4.4 6.8 5.6M1.1 0.3C-0.4 2-0.4 4.8 1.1 6.5M8.3 0.3C9.8 2 9.8 4.8 8.3 6.5" stroke="#fff" stroke-width="1.05" fill="none"/></svg>
<svg style="position:absolute;left:859px;top:467px;" width="11.5" height="8" viewBox="0 0 11.5 8"><path d="M0.5 4.8L2.6 7L7 1M4.6 5.8L5.8 7L10.8 1" fill="none" stroke="#fff" stroke-width="1.15"/></svg>
<svg style="position:absolute;left:915px;top:466px;" width="10.5" height="10.5" viewBox="0 0 10.5 10.5"><path d="M1.2 8.2H8.8L7.8 6.6V4.4C7.8 2.6 6.6 1.3 5 1.3C3.4 1.3 2.2 2.6 2.2 4.4V6.6ZM3.9 8.4C3.9 9.2 4.4 9.8 5 9.8C5.6 9.8 6.1 9.2 6.1 8.4" fill="none" stroke="#fff" stroke-width="0.9" stroke-linejoin="round"/><circle cx="8" cy="2.4" r="2" fill="#fff"/></svg>
<span class="t " style="left:19.00px;top:6.50px;font-size:8.25px;color:#c0c0c0;font-weight:normal;font-style:normal;letter-spacing:-0.817px">EXPLORER</span>
<span class="t " style="left:19.00px;top:28.20px;font-size:8.25px;color:#dddddd;font-weight:bold;font-style:normal;letter-spacing:-0.234px">OPEN EDITORS</span>
<span class="t ic" style="left:39.00px;top:42.70px;font-size:8.3px;color:#cbcb41;font-weight:bold;font-style:normal;letter-spacing:1.366px">{}</span>
<span class="t " style="left:52.00px;top:43.30px;font-size:9.75px;color:#cccccc;font-weight:normal;font-style:normal;letter-spacing:-0.047px">package.json</span>
<span class="t " style="left:52.00px;top:60.10px;font-size:9.75px;color:#cccccc;font-weight:normal;font-style:normal;letter-spacing:0.146px">index.html</span>
<span class="t " style="left:52.00px;top:76.70px;font-size:9.75px;color:#cccccc;font-weight:normal;font-style:normal;letter-spacing:0.243px">unlock-popup.html</span>
<span class="t ic" style="left:39.20px;top:93.50px;font-size:7.6px;color:#cbcb41;font-weight:bold;font-style:normal;letter-spacing:0px;transform-origin:0 50%;transform:scaleX(0.9358)">JS</span>
<span class="t " style="left:52.00px;top:93.20px;font-size:9.75px;color:#e0e0e0;font-weight:normal;font-style:normal;letter-spacing:-0.058px">index.js</span>
<span class="t ic" style="left:39.00px;top:109.30px;font-size:8.3px;color:#cbcb41;font-weight:bold;font-style:normal;letter-spacing:1.366px">{}</span>
<span class="t " style="left:52.00px;top:109.90px;font-size:9.75px;color:#cccccc;font-weight:normal;font-style:italic;letter-spacing:-0.138px">package-lock.json</span>
<span class="t " style="left:19.00px;top:128.10px;font-size:8.25px;color:#dddddd;font-weight:bold;font-style:normal;letter-spacing:-0.419px">BLOG1-PROJECT</span>
<span class="t " style="left:29.60px;top:143.70px;font-size:9.75px;color:#cccccc;font-weight:normal;font-style:normal;letter-spacing:0.011px">node_modules</span>
<span class="t " style="left:29.60px;top:160.10px;font-size:9.75px;color:#cccccc;font-weight:normal;font-style:normal;letter-spacing:0.156px">index.html</span>
<span class="t ic" style="left:16.20px;top:176.90px;font-size:7.6px;color:#cbcb41;font-weight:bold;font-style:normal;letter-spacing:0px;transform-origin:0 50%;transform:scaleX(0.9358)">JS</span>
<span class="t " style="left:29.60px;top:176.60px;font-size:9.75px;color:#e0e0e0;font-weight:normal;font-style:normal;letter-spacing:-0.033px">index.js</span>
<span class="t ic" style="left:16.00px;top:192.70px;font-size:8.3px;color:#cbcb41;font-weight:bold;font-style:normal;letter-spacing:1.366px">{}</span>
<span class="t " style="left:29.60px;top:193.30px;font-size:9.75px;color:#cccccc;font-weight:normal;font-style:normal;letter-spacing:0.015px">package-lock.json</span>
<span class="t ic" style="left:16.00px;top:209.30px;font-size:8.3px;color:#cbcb41;font-weight:bold;font-style:normal;letter-spacing:1.366px">{}</span>
<span class="t " style="left:29.60px;top:209.90px;font-size:9.75px;color:#cccccc;font-weight:normal;font-style:normal;letter-spacing:-0.039px">package.json</span>
<span class="t " style="left:29.60px;top:226.70px;font-size:9.75px;color:#cccccc;font-weight:normal;font-style:normal;letter-spacing:0.249px">unlock-popup.html</span>
<span class="t " style="left:19.30px;top:433.20px;font-size:8.25px;color:#dddddd;font-weight:bold;font-style:normal;letter-spacing:-0.103px">OUTLINE</span>
<span class="t " style="left:19.30px;top:450.20px;font-size:8.25px;color:#dddddd;font-weight:bold;font-style:normal;letter-spacing:-0.050px">TIMELINE</span>
<span class="t ic" style="left:245.90px;top:5.10px;font-size:8.3px;color:#a1a13c;font-weight:bold;font-style:normal;letter-spacing:1.366px">{}</span>
<span class="t " style="left:259.10px;top:5.70px;font-size:9.75px;color:#a4a4a4;font-weight:normal;font-style:normal;letter-spacing:-0.081px">package.json</span>
<span class="t " style="left:361.10px;top:5.70px;font-size:9.75px;color:#a4a4a4;font-weight:normal;font-style:normal;letter-spacing:0.086px">index.html</span>
<span class="t " style="left:452.10px;top:5.70px;font-size:9.75px;color:#a4a4a4;font-weight:normal;font-style:normal;letter-spacing:0.249px">unlock-popup.html</span>
<span class="t ic" style="left:568.40px;top:6.00px;font-size:7.6px;color:#cbcb41;font-weight:bold;font-style:normal;letter-spacing:0px;transform-origin:0 50%;transform:scaleX(0.9358)">JS</span>
<span class="t " style="left:581.40px;top:5.70px;font-size:9.75px;color:#ffffff;font-weight:normal;font-style:normal;letter-spacing:-0.033px">index.js</span>
<span class="t ic" style="left:659.00px;top:5.10px;font-size:8.3px;color:#a1a13c;font-weight:bold;font-style:normal;letter-spacing:1.366px">{}</span>
<span class="t " style="left:672.20px;top:5.70px;font-size:9.75px;color:#a4a4a4;font-weight:normal;font-style:italic;letter-spacing:-0.138px">package-lock.json</span>
<span class="t ic" style="left:250.40px;top:26.80px;font-size:7.6px;color:#cbcb41;font-weight:bold;font-style:normal;letter-spacing:0px;transform-origin:0 50%;transform:scaleX(0.9358)">JS</span>
<span class="t " style="left:263.40px;top:27.40px;font-size:9.75px;color:#a9a9a9;font-weight:normal;font-style:normal;letter-spacing:-0.083px">index.js</span>
<span class="t " style="left:322.40px;top:27.40px;font-size:9.75px;color:#a9a9a9;font-weight:normal;font-style:normal;letter-spacing:0.002px">createWindow</span>
<span class="t " style="left:411.10px;top:27.40px;font-size:9.75px;color:#a9a9a9;font-weight:normal;font-style:normal;letter-spacing:0.080px">powerMonitor.on(&#x27;unlock-screen&#x27;) callback</span>
<span class="t " style="left:23.20px;top:465.10px;font-size:9px;color:#ffffff;font-weight:normal;font-style:normal;letter-spacing:-0.016px">Launchpad</span>
<span class="t " style="left:91.90px;top:465.10px;font-size:9px;color:#ffffff;font-weight:normal;font-style:normal;letter-spacing:0.484px">0</span>
<span class="t " style="left:112.40px;top:465.10px;font-size:9px;color:#ffffff;font-weight:normal;font-style:normal;letter-spacing:0.384px">0</span>
<span class="t " style="left:142.60px;top:465.10px;font-size:9px;color:#ffffff;font-weight:normal;font-style:normal;letter-spacing:0.484px">0</span>
<span class="t " style="left:615.00px;top:465.10px;font-size:9px;color:#ffffff;font-weight:normal;font-style:normal;letter-spacing:-0.081px">Ln 30, Col 54</span>
<span class="t " style="left:679.30px;top:465.10px;font-size:9px;color:#ffffff;font-weight:normal;font-style:normal;letter-spacing:-0.326px">Spaces: 2</span>
<span class="t " style="left:728.10px;top:465.10px;font-size:9px;color:#ffffff;font-weight:normal;font-style:normal;letter-spacing:-0.200px">UTF-8</span>
<span class="t " style="left:764.40px;top:465.10px;font-size:9px;color:#ffffff;font-weight:normal;font-style:normal;letter-spacing:-0.854px">CRLF</span>
<span class="t " style="left:795.90px;top:464.10px;font-size:9px;color:#ffffff;font-weight:normal;font-style:normal;letter-spacing:2.092px">{}</span>
<span class="t " style="left:809.60px;top:465.10px;font-size:9px;color:#ffffff;font-weight:normal;font-style:normal;letter-spacing:-0.223px">JavaScript</span>
<span class="t " style="left:873.10px;top:465.10px;font-size:9px;color:#ffffff;font-weight:normal;font-style:normal;letter-spacing:0.061px">Prettier</span>
</body></html>
